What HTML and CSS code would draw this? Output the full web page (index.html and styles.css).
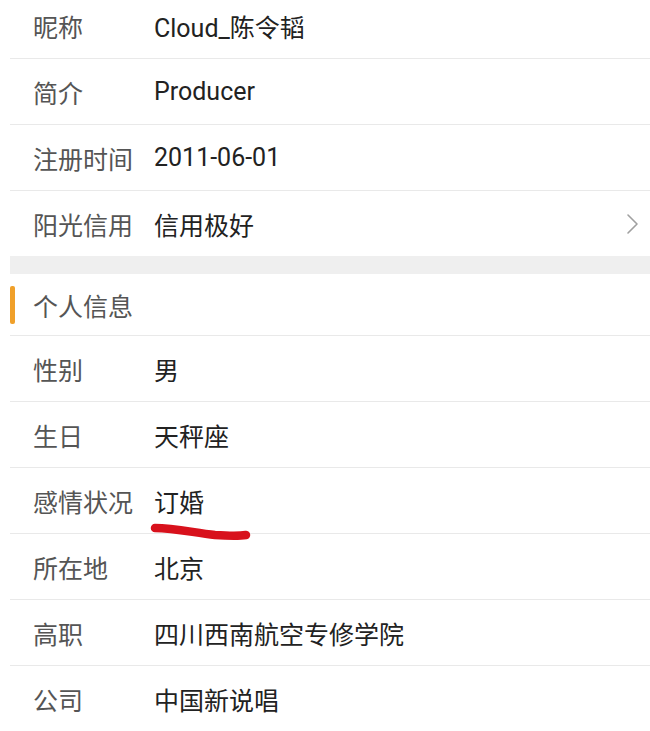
FILE: index.html
```html
<!DOCTYPE html>
<html lang="zh">
<head>
<meta charset="utf-8">
<link rel="stylesheet" href="styles.css">
</head>
<body>
<div class="page">
  <div class="group first">
    <div class="row"><span class="label">昵称</span><span class="value">Cloud_陈令韬</span></div>
    <div class="row"><span class="label">简介</span><span class="value">Producer</span></div>
    <div class="row"><span class="label">注册时间</span><span class="value">2011-06-01</span></div>
    <div class="row last"><span class="label">阳光信用</span><span class="value">信用极好</span>
      <svg class="chev" width="14" height="22" viewBox="0 0 14 22"><path d="M2 2 L11 11 L2 20" fill="none" stroke="#a0a0a0" stroke-width="1.6" stroke-linecap="round" stroke-linejoin="round"/></svg>
    </div>
  </div>
  <div class="band"></div>
  <div class="group">
    <div class="row header"><span class="bar"></span><span class="label">个人信息</span></div>
    <div class="row"><span class="label">性别</span><span class="value">男</span></div>
    <div class="row"><span class="label">生日</span><span class="value">天秤座</span></div>
    <div class="row"><span class="label">感情状况</span><span class="value mark">订婚<svg class="scribble" width="104" height="24" viewBox="0 0 104 24"><path d="M5 6 C 25 6, 45 11, 65 13 C 80 14, 90 14, 96 13" fill="none" stroke="#d8111c" stroke-width="8.5" stroke-linecap="round"/></svg></span></div>
    <div class="row"><span class="label">所在地</span><span class="value">北京</span></div>
    <div class="row"><span class="label">高职</span><span class="value">四川西南航空专修学院</span></div>
    <div class="row"><span class="label">公司</span><span class="value">中国新说唱</span></div>
  </div>
</div>
</body>
</html>
```

FILE: styles.css
```css
html, body {
  margin: 0;
  padding: 0;
  background: #fff;
}
.page {
  width: 650px;
  height: 731px;
  overflow: hidden;
  font-family: Roboto, "Noto Sans CJK SC", sans-serif;
  font-size: 25px;
}
.group {
  margin-left: 10px;
}
.group.first {
  margin-top: -7px;
}
.row {
  position: relative;
  display: flex;
  align-items: center;
  height: 65px;
  border-bottom: 1px solid #e9e9e9;
  padding-left: 23px;
}
.row.last {
  border-bottom: none;
}
.label {
  width: 121px;
  flex: none;
  color: #555;
  white-space: nowrap;
}
.value {
  color: #222;
  white-space: nowrap;
}
.chev {
  position: absolute;
  right: 10px;
  top: 22px;
}
.band {
  margin-left: 10px;
  height: 18px;
  background: #efefef;
}
.row.header {
  height: 61px;
}
.bar {
  position: absolute;
  left: 0;
  top: 12px;
  width: 5px;
  height: 38px;
  border-radius: 2px;
  background: #f0a02a;
}
.mark {
  position: relative;
}
.scribble {
  position: absolute;
  left: -4px;
  top: 39px;
}
```
